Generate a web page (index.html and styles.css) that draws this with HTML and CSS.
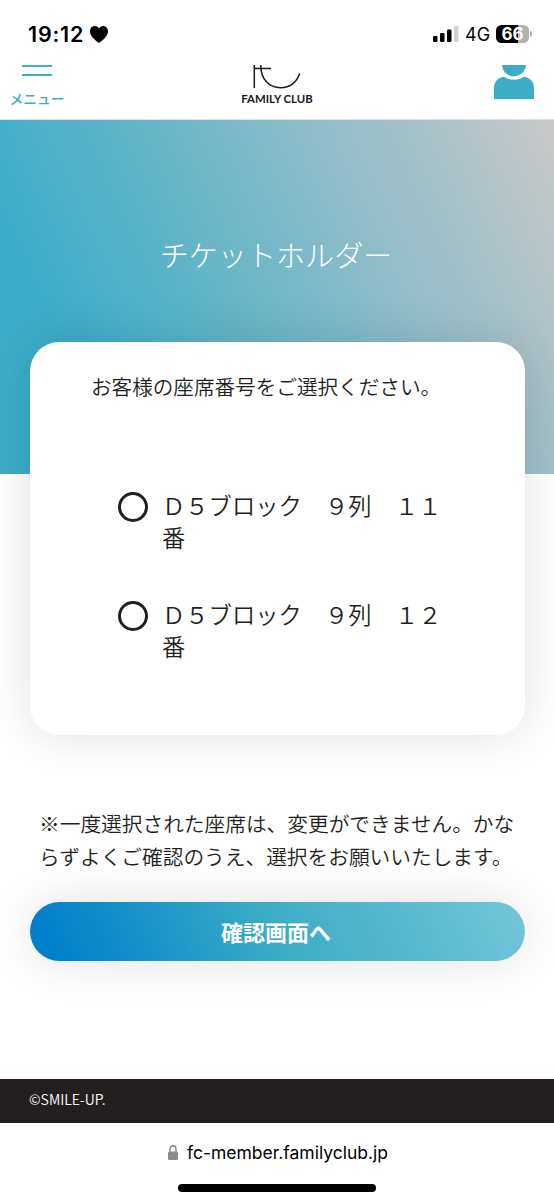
FILE: index.html
```html
<!DOCTYPE html>
<html lang="ja">
<head>
  <meta charset="UTF-8">
  <meta name="viewport" content="width=device-width, initial-scale=1">
  <title>チケットホルダー</title>
  <link rel="stylesheet" href="styles.css">
</head>
<body>
<div class="status-bar">
  <div class="status-left">
    <span class="time">19:12</span>
    <svg class="heart" width="18" height="17" viewBox="0 0 18 17"><path d="M9 17C6 15 0 10.5 0 5.300C0 2.200 2.100 0 4.800 0C6.700 0 8.200 1 9 2.500C9.800 1 11.300 0 13.200 0C15.900 0 18 2.200 18 5.300C18 10.500 12 15 9 17Z"/></svg>
  </div>
  <div class="status-right">
    <svg width="26" height="16" viewBox="0 0 26 16">
      <rect x="0" y="10" width="4.500" height="6" rx="1.200"/>
      <rect x="7" y="7" width="4.500" height="9" rx="1.200"/>
      <rect x="14" y="3.500" width="4.500" height="12.500" rx="1.200"/>
      <rect x="21" y="0" width="4.500" height="16" rx="1.200" fill="#d2d2d2"/>
    </svg>
    <span class="network">4G</span>
    <div class="battery"><span>66</span></div>
    <div class="battery-tip"></div>
  </div>
</div>

<header class="header">
  <div class="menu">
    <div class="menu-lines"></div>
    <span>メニュー</span>
  </div>
  <div class="logo">
    <svg width="48" height="25" viewBox="0 0 48 25" fill="none" stroke="#1a1a1a" stroke-width="1.500">
      <path d="M1.300 0V23M1.300 3.500H18M7.800 0C7.500 14 16 22.700 27.500 22.700C36.500 22.700 43.500 17.500 46.700 8.500"/>
    </svg>
    <span>FAMILY CLUB</span>
  </div>
  <svg class="user" width="40" height="34" viewBox="0 0 40 34" fill="#3cadc4">
    <path d="M8 0H32C31.500 6.500 26.500 11.200 20 11.200C13.500 11.200 8.500 6.500 8 0Z"/>
    <path d="M0 34V23C0 17 4 12.300 10 11.700C12.500 13.600 16 14.700 20 14.700C24 14.700 27.500 13.600 30 11.700C36 12.300 40 17 40 23V34Z"/>
  </svg>
</header>

<main>
  <section class="hero">
    <h1>チケットホルダー</h1>
  </section>

  <form class="card">
    <p class="lead">お客様の座席番号をご選択ください。</p>
    <label class="seat">
      <input type="radio" name="seat">
      <span>Ｄ５ブロック　９列　１１番</span>
    </label>
    <label class="seat">
      <input type="radio" name="seat">
      <span>Ｄ５ブロック　９列　１２番</span>
    </label>
  </form>

  <p class="notice">※一度選択された座席は、変更ができません。かな<br>らずよくご確認のうえ、選択をお願いいたします。</p>
  <button class="btn" type="button">確認画面へ</button>
</main>

<footer class="footer">©SMILE-UP.</footer>

<div class="browser-bar">
  <div class="address">
    <svg width="10" height="15" viewBox="0 0 10 15">
      <path d="M2 7V4C2 2 3.200 .8 5 .8S8 2 8 4V7" fill="none" stroke="#8a8a8e" stroke-width="1.400"/>
      <rect x="0" y="6.500" width="10" height="8.500" rx="1.500" fill="#8a8a8e"/>
    </svg>
    <span>fc-member.familyclub.jp</span>
  </div>
  <div class="home-indicator"></div>
</div>
</body>
</html>
```
FILE: styles.css
```css
* {
  box-sizing: border-box;
}

body {
  margin: 0;
  height: 1200px;
  display: flex;
  flex-direction: column;
  overflow: hidden;
  background: #fff;
  color: #231f20;
  font-family: 'Noto Sans CJK JP', sans-serif;
  font-weight: 350;
}

.status-bar {
  height: 58px;
  padding: 10px 22px 0 28px;
  display: flex;
  justify-content: space-between;
  align-items: center;
  color: #000;
  font-family: Inter, sans-serif;
}

.status-left,
.status-right {
  display: flex;
  align-items: center;
}

.time {
  width: 56px;
  margin-right: 6px;
  font-size: 21.5px;
  font-weight: 600;
  letter-spacing: 0.8px;
}

.network {
  width: 25px;
  margin: 0 6px;
  font-size: 18px;
  font-weight: 400;
}

.battery {
  width: 33px;
  height: 18px;
  border-radius: 5.5px;
  background: linear-gradient(90deg, #000 66%, #b3b3b3 66%);
  color: #fff;
  font-size: 17px;
  font-weight: 700;
  line-height: 18px;
  text-align: center;
}

.battery-tip {
  width: 2px;
  height: 6px;
  margin-left: 1px;
  border-radius: 0 2px 2px 0;
  background: #b3b3b3;
}

.header {
  height: 62px;
  padding: 7px 20px 0 9px;
  display: grid;
  grid-template-columns: 56px 1fr 40px;
  border-bottom: 1px solid #d5e5e9;
}

.menu {
  display: flex;
  flex-direction: column;
  align-items: center;
  color: #3cadc4;
  font-size: 13.8px;
  font-weight: 500;
  line-height: 20px;
  white-space: nowrap;
}

.menu-lines {
  width: 30px;
  height: 11px;
  margin-bottom: 12px;
  border-top: 2px solid #3cadc4;
  border-bottom: 2px solid #3cadc4;
}

.logo {
  padding-right: 11px;
  padding-left: 6px;
  display: flex;
  flex-direction: column;
  align-items: center;
  color: #1a1a1a;
  font-family: Lato, sans-serif;
  font-size: 11.4px;
  font-weight: 700;
  line-height: 16px;
}

.logo span {
  margin-top: 1px;
}

.hero {
  height: 354px;
  padding-top: 113px;
  background: linear-gradient(65deg, #3badc9 18%, #c9c8c8 100%);
}

.hero h1 {
  margin: 0;
  padding-right: 2px;
  color: #fff;
  font-size: 29.1px;
  font-weight: 300;
  line-height: 42px;
  text-align: center;
}

.card {
  position: relative;
  width: 495px;
  height: 393px;
  margin: -132px 0 0 29.5px;
  padding: 29px 61.5px 0;
  border-radius: 29px;
  background: #fff;
  box-shadow: 0 0 50px rgba(0, 0, 0, 0.12);
}

.lead {
  margin: 0 0 90px;
  font-size: 20.6px;
  line-height: 31px;
}

.seat {
  display: flex;
  align-items: flex-start;
  margin: 0 0 46px 27px;
  font-size: 23.3px;
  line-height: 31.5px;
}

.seat input {
  flex: none;
  appearance: none;
  width: 30px;
  height: 30px;
  margin: 0 14px 0 0;
  border: 3px solid #231f20;
  border-radius: 50%;
}

.seat span {
  width: 290px;
  margin-top: -2px;
  margin-bottom: 2px;
}

.notice {
  margin: 72px 0 0 39px;
  font-size: 20.7px;
  line-height: 32.5px;
  white-space: nowrap;
}

.btn {
  display: block;
  width: 495px;
  height: 59px;
  margin: 30px 0 0 29.5px;
  padding: 0 2px 2px 0;
  border: none;
  border-radius: 30px;
  background: linear-gradient(65deg, #0080cc 5%, #3badc5 50%, #75c5d8 100%);
  box-shadow: 0 0 50px rgba(0, 0, 0, 0.12);
  color: #fff;
  font-family: inherit;
  font-size: 22px;
  font-weight: 700;
  cursor: pointer;
}

.footer {
  height: 44px;
  margin-top: auto;
  padding-left: 29px;
  background: #231f20;
  color: #fff;
  font-size: 14px;
  line-height: 40px;
}

.browser-bar {
  height: 77px;
  display: flex;
  flex-direction: column;
  align-items: center;
}

.address {
  height: 58px;
  padding-left: 2px;
  display: flex;
  align-items: center;
  gap: 9px;
  color: #000;
  font-family: Inter, sans-serif;
  font-size: 17.5px;
  font-weight: 400;
}

.home-indicator {
  width: 198px;
  height: 8px;
  margin-top: 3px;
  border-radius: 4px;
  background: #000;
}
```
